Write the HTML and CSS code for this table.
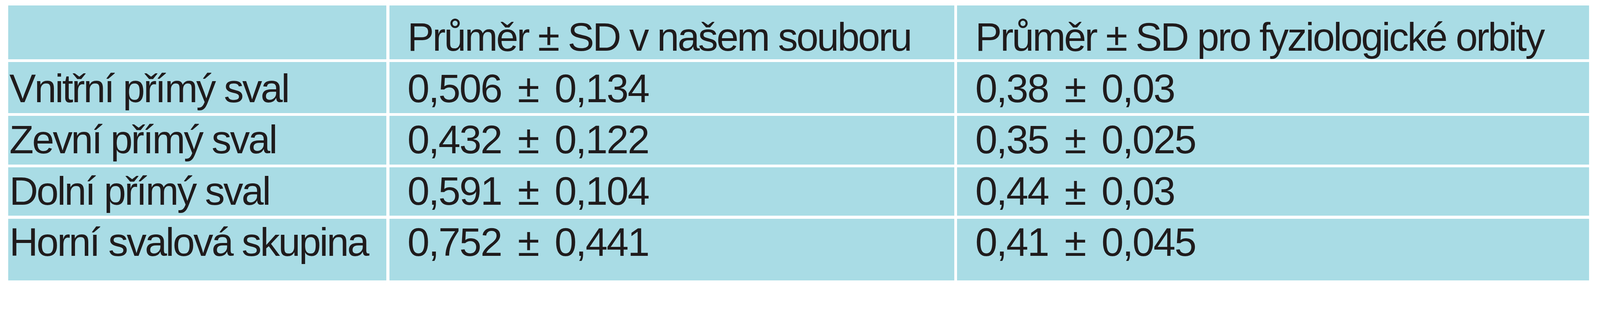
FILE: index.html
```html
<!DOCTYPE html>
<html lang="cs">
<head>
<meta charset="utf-8">
<title>Tabulka</title>
<link rel="stylesheet" href="styles.css">
</head>
<body>
<div class="table">
  <div class="cell head first"></div>
  <div class="cell head">Průměr ± SD v našem souboru</div>
  <div class="cell head">Průměr ± SD pro fyziologické orbity</div>

  <div class="cell r1 first">Vnitřní přímý sval</div>
  <div class="cell r1 num">0,506 ± 0,134</div>
  <div class="cell r1 num">0,38 ± 0,03</div>

  <div class="cell r2 first">Zevní přímý sval</div>
  <div class="cell r2 num">0,432 ± 0,122</div>
  <div class="cell r2 num">0,35 ± 0,025</div>

  <div class="cell r3 first">Dolní přímý sval</div>
  <div class="cell r3 num">0,591 ± 0,104</div>
  <div class="cell r3 num">0,44 ± 0,03</div>

  <div class="cell r4 first">Horní svalová skupina</div>
  <div class="cell r4 num">0,752 ± 0,441</div>
  <div class="cell r4 num">0,41 ± 0,045</div>
</div>
</body>
</html>
```
FILE: styles.css
```css
html, body {
  margin: 0;
  padding: 0;
  background: #ffffff;
}

body {
  font-family: "Liberation Sans", Arial, sans-serif;
  color: #1f1b1c;
}

.table {
  display: grid;
  grid-template-columns: 968px 1446.4px 1617.6px;
  grid-template-rows: 137.9px 130.5px 124.9px 124px 158.2px;
  gap: 7.4px;
  margin: 13.9px 0 0 21.3px;
  width: 4046.8px;
}

.cell {
  background: #a9dce5;
  font-size: 101.8px;
  line-height: 101.8px;
  letter-spacing: -4px;
  padding-left: 46.3px;
  white-space: nowrap;
}

.cell.first {
  padding-left: 2.8px;
}

.cell.num {
  letter-spacing: -2.8px;
  word-spacing: 16px;
}

.head { padding-top: 31.3px; }
.r1 { padding-top: 17.4px; }
.r2 { padding-top: 11px; }
.r3 { padding-top: 11px; }
.r4 { padding-top: 10px; }
```
